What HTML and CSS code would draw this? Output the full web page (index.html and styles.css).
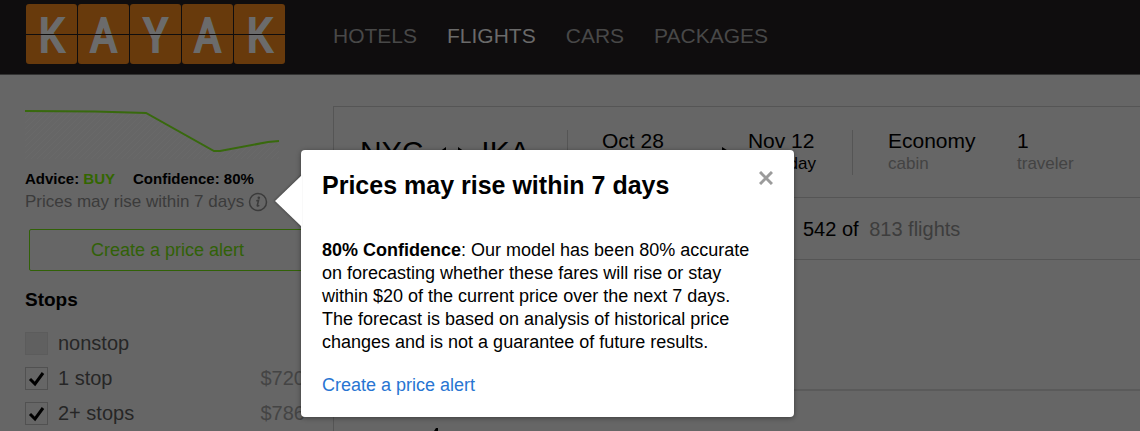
FILE: index.html
```html
<!DOCTYPE html>
<html lang="en">
<head>
<meta charset="utf-8">
<title>KAYAK flights</title>
<link rel="stylesheet" href="styles.css">
</head>
<body>
<header class="header">
  <a class="logo" href="#" aria-label="KAYAK"><span class="tile">K</span><span class="tile">A</span><span class="tile">Y</span><span class="tile">A</span><span class="tile">K</span></a>
  <nav class="nav">
    <a href="#">HOTELS</a>
    <a href="#" class="active">FLIGHTS</a>
    <a href="#">CARS</a>
    <a href="#">PACKAGES</a>
  </nav>
</header>
<main class="page">
  <aside class="sidebar">
    <svg class="chart" viewBox="0 0 254 54" aria-hidden="true">
      <defs><pattern id="hatch" width="6" height="6" patternUnits="userSpaceOnUse"><path d="M0 6L6 0" stroke="#696969" stroke-width="1"/></pattern></defs>
      <path d="M0 6L121 8L189 46L254 36V54H0Z" fill="url(#hatch)"/>
      <path d="M0 6L70 6.500L121 8L189 46H195L243 37L254 36" fill="none" stroke="#38690d" stroke-width="2"/>
    </svg>
    <div class="advice"><span>Advice: <em>BUY</em></span><span>Confidence: 80%</span></div>
    <div class="forecast">
      <span>Prices may rise within 7 days</span>
      <button class="info" aria-label="About this forecast">
        <svg viewBox="0 0 20 20"><circle cx="10" cy="10" r="8.500" fill="none" stroke="#3b3b3b" stroke-width="1.500"/><circle cx="10.800" cy="5.800" r="1.300" fill="#3b3b3b"/><path d="M8.300 8.800L10.600 8.300L9.300 13.500Q9.200 14.600 11.300 13.400" fill="none" stroke="#3b3b3b" stroke-width="1.500"/></svg>
      </button>
    </div>
    <button class="alert">Create a price alert</button>
    <h2 class="stops-title">Stops</h2>
    <div class="stop"><input type="checkbox" id="s0" disabled><label for="s0">nonstop</label></div>
    <div class="stop"><input type="checkbox" id="s1" checked><label for="s1">1 stop</label><span class="fare">$720</span></div>
    <div class="stop"><input type="checkbox" id="s2" checked><label for="s2">2+ stops</label><span class="fare">$786</span></div>
  </aside>
  <section class="results">
    <div class="trip">
      <div class="route">
        <span>NYC</span>
        <svg class="both-ways" viewBox="0 0 26 12" aria-label="round trip"><path d="M0 6L7 1V11ZM26 6L19 1V11Z"/><path d="M5 6H21" stroke="#000" stroke-width="2"/></svg>
        <span>IKA</span>
      </div>
      <div class="dates">
        <div class="field"><b>Oct 28</b><span>Friday</span></div>
        <svg class="arrow" viewBox="0 0 8 10" aria-hidden="true"><path d="M0 0L8 5L0 10Z"/></svg>
        <div class="field"><b>Nov 12</b><span>Saturday</span></div>
      </div>
      <div class="field cabin"><b>Economy</b><span>cabin</span></div>
      <div class="field muted"><b>1</b><span>traveler</span></div>
    </div>
    <div class="count">542 of <span>813 flights</span></div>
    <div class="result"></div>
    <div class="result next"><svg class="carrier" viewBox="0 0 4 4" aria-hidden="true"><path d="M0 4L2 1H4V4Z"/></svg></div>
  </section>
</main>
<section class="popover" role="dialog" aria-labelledby="pt">
  <svg class="pointer" viewBox="0 0 28 52" aria-hidden="true"><path d="M28 0L1 26L28 52Z" fill="#fff"/></svg>
  <div class="popover-head">
    <h1 id="pt">Prices may rise within 7 days</h1>
    <button class="close" aria-label="Close"><svg viewBox="0 0 14 14"><path d="M1 1L13 13M13 1L1 13" stroke="#9b9b9b" stroke-width="3"/></svg></button>
  </div>
  <p><strong>80% Confidence</strong>: Our model has been 80% accurate on forecasting whether these fares will rise or stay within $20 of the current price over the next 7 days. The forecast is based on analysis of historical price changes and is not a guarantee of future results.</p>
  <a class="link" href="#">Create a price alert</a>
</section>
</body>
</html>
```
FILE: styles.css
```css
* { box-sizing: border-box; }
body {
  margin: 0;
  min-height: 100vh;
  background: #666;
  color: #000;
  font-family: "Liberation Sans", Arial, sans-serif;
  position: relative;
}
button { font: inherit; background: none; border: 0; padding: 0; }
a { text-decoration: none; }
h1, h2, p { margin: 0; }

.header {
  display: flex;
  align-items: flex-start;
  gap: 48px;
  height: 75px;
  padding: 4px 26px;
  background: #0f0d0e;
  border-bottom: 1px solid #333;
}
.logo { display: flex; gap: 1px; }
.tile {
  position: relative;
  width: 51px;
  height: 60px;
  border-radius: 3px;
  background: #683a0c;
  color: #6b6b6b;
  font: 48px/64px "Liberation Sans Narrow", "Roboto Condensed", "DejaVu Sans Condensed", sans-serif;
  -webkit-text-stroke: 2px #6b6b6b;
  text-align: center;
}
.tile::after {
  content: "";
  position: absolute;
  left: 0;
  right: 0;
  top: 30px;
  height: 1px;
  background: #0f0d0e;
}
.nav { display: flex; gap: 30px; padding-top: 20px; font-size: 21px; line-height: 24px; }
.nav a { color: #484848; }
.nav .active { color: #6a6a6a; }

.page { display: flex; gap: 24px; padding-left: 25px; }
.sidebar { flex: 0 0 284px; padding-top: 30px; }
.chart { display: block; width: 254px; height: 54px; }
.advice { display: flex; gap: 18px; margin-top: 9px; font-size: 15px; line-height: 22px; font-weight: bold; }
.advice em { font-style: normal; color: #336600; }
.forecast { display: flex; align-items: center; gap: 4px; font-size: 17px; line-height: 23px; color: #3b3b3b; }
.info { width: 20px; height: 20px; }
.info svg { display: block; }
.alert {
  display: block;
  width: 277px;
  height: 42px;
  margin: 16px 0 0 4px;
  border: 1px solid #316107;
  border-radius: 2px;
  color: #316107;
  font-size: 18px;
}
.stops-title { margin: 18px 0 15px; font-size: 19px; line-height: 22px; }
.stop { display: flex; align-items: center; height: 35px; font-size: 20px; color: #262626; }
.stop input {
  appearance: none;
  width: 23px;
  height: 23px;
  margin: 0 10px 0 0;
  border: 1px solid #515151;
}
.stop input:disabled { background: #606060; border-color: #5c5c5c; }
.stop input:checked {
  background: url("data:image/svg+xml,%3Csvg xmlns='http://www.w3.org/2000/svg' viewBox='0 0 21 21'%3E%3Cpath d='M4 11L9 16L17 5' fill='none' stroke='%23000' stroke-width='3'/%3E%3C/svg%3E") center / 21px 21px no-repeat;
}
.fare { margin-left: auto; padding-right: 4px; color: #444; }

.results { flex: 1; margin-top: 31px; border: solid #555; border-width: 1px 0 0 1px; }
.trip { display: flex; align-items: center; height: 91px; padding-left: 26px; border-bottom: 1px solid #555; }
.route { display: flex; align-items: center; gap: 16px; width: 207px; font-size: 30px; }
.both-ways { width: 26px; height: 12px; }
.dates {
  display: flex;
  align-items: center;
  width: 286px;
  height: 45px;
  padding-left: 34px;
  border: solid #555;
  border-width: 0 1px;
}
.dates .arrow { width: 8px; height: 10px; margin: 0 18px 0 58px; }
.field b, .field span { display: block; white-space: nowrap; }
.field b { font-size: 21px; font-weight: normal; line-height: 24px; }
.field span { font-size: 17px; line-height: 22px; }
.cabin { width: 164px; padding-left: 35px; }
.cabin span, .muted span { color: #434343; }
.count { padding: 20px 0 19px 469px; font-size: 20px; line-height: 22px; border-bottom: 1px solid #555; }
.count span { margin-left: 5px; color: #3d3d3d; }
.result { height: 131px; border-bottom: 2px solid #5a5a5a; }
.result.next { height: 40px; padding: 36px 0 0 100px; border: 0; }
.carrier { display: block; width: 4px; height: 4px; }

.popover {
  position: absolute;
  left: 301px;
  top: 150px;
  width: 493px;
  padding: 20px 21px 21px;
  border-radius: 4px;
  background: #fff;
  box-shadow: 0 1px 5px rgba(0, 0, 0, .4);
}
.pointer { position: absolute; left: -27px; top: 25px; width: 28px; height: 52px; filter: drop-shadow(-1px 0 1px rgba(0, 0, 0, .3)); }
.popover-head { display: flex; justify-content: space-between; align-items: flex-start; }
.popover-head h1 { font-size: 25px; line-height: 30px; }
.close { width: 14px; height: 14px; margin-top: 1px; }
.close svg { display: block; }
.popover p { margin-top: 39px; padding-right: 21px; font-size: 18px; line-height: 23px; }
.link { display: block; margin-top: 20px; font-size: 18px; line-height: 22px; color: #2875d2; }
```
